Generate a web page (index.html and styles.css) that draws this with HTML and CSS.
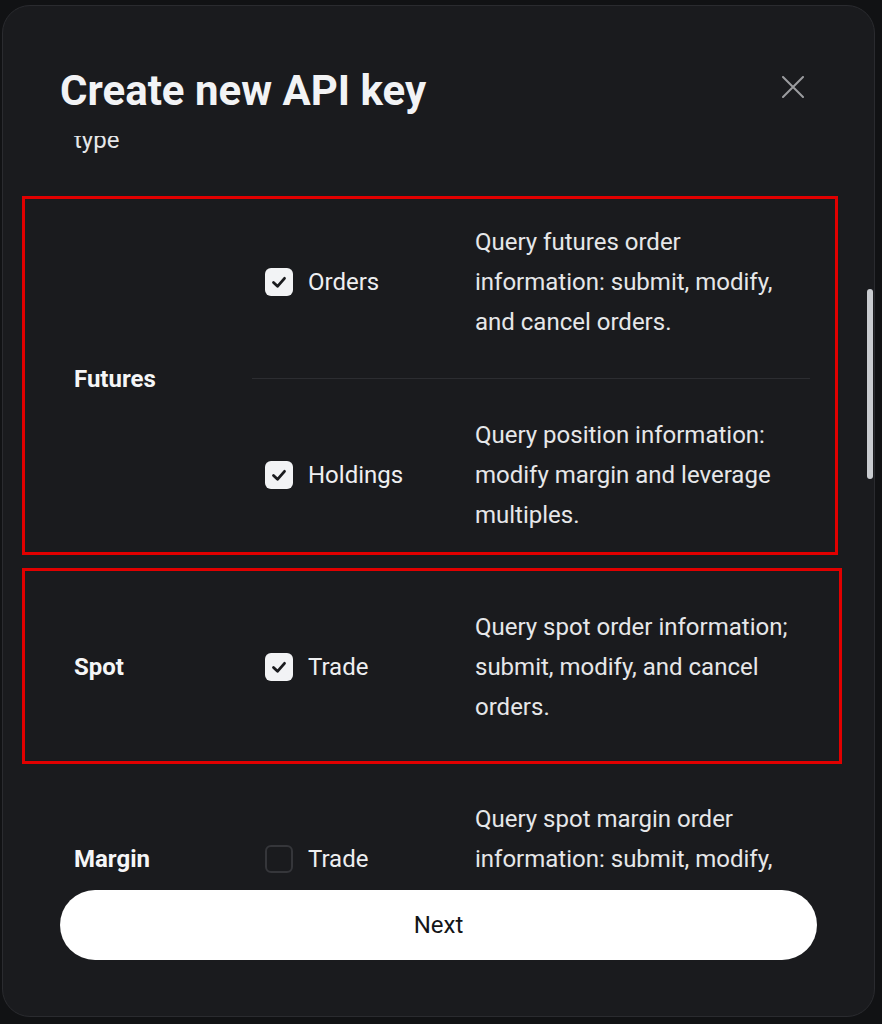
FILE: index.html
```html
<!DOCTYPE html>
<html lang="en">
<head>
    <meta charset="UTF-8">
    <meta name="viewport" content="width=device-width, initial-scale=1.0">
    <title>Create new API key</title>
    <link rel="stylesheet" href="styles.css">
</head>
<body>
    <div class="modal">
        <div class="modal-header">
            <h2>Create new API key</h2>
            <button class="close-btn" aria-label="Close">
                <svg width="22" height="22" viewBox="0 0 22 22"><path d="M1 1L21 21M21 1L1 21" stroke="currentColor" stroke-width="2" stroke-linecap="round"/></svg>
            </button>
        </div>

        <div class="modal-body">
            <div class="prev-tail">type</div>

            <div class="perm-group">
                <span class="mark mark-futures"></span>
                <div class="perm-label">Futures</div>
                <div class="perm-options">
                    <div class="perm-row">
                        <label class="perm-check"><span class="checkbox checked"><svg width="28" height="28" viewBox="0 0 28 28"><path d="M8.5 14.5L12.5 18.3L19.5 10.3" fill="none" stroke="#1a1b1e" stroke-width="2.8" stroke-linecap="round" stroke-linejoin="round"/></svg></span>Orders</label>
                        <div class="perm-desc">Query futures order information: submit, modify, and cancel orders.</div>
                    </div>
                    <div class="perm-row">
                        <label class="perm-check"><span class="checkbox checked"><svg width="28" height="28" viewBox="0 0 28 28"><path d="M8.5 14.5L12.5 18.3L19.5 10.3" fill="none" stroke="#1a1b1e" stroke-width="2.8" stroke-linecap="round" stroke-linejoin="round"/></svg></span>Holdings</label>
                        <div class="perm-desc">Query position information: modify margin and leverage multiples.</div>
                    </div>
                </div>
            </div>

            <div class="perm-group">
                <span class="mark mark-spot"></span>
                <div class="perm-label">Spot</div>
                <div class="perm-options">
                    <div class="perm-row">
                        <label class="perm-check"><span class="checkbox checked"><svg width="28" height="28" viewBox="0 0 28 28"><path d="M8.5 14.5L12.5 18.3L19.5 10.3" fill="none" stroke="#1a1b1e" stroke-width="2.8" stroke-linecap="round" stroke-linejoin="round"/></svg></span>Trade</label>
                        <div class="perm-desc">Query spot order information; submit, modify, and cancel orders.</div>
                    </div>
                </div>
            </div>

            <div class="perm-group">
                <div class="perm-label">Margin</div>
                <div class="perm-options">
                    <div class="perm-row">
                        <label class="perm-check"><span class="checkbox"></span>Trade</label>
                        <div class="perm-desc">Query spot margin order information: submit, modify, and cancel orders.</div>
                    </div>
                </div>
            </div>

            <div class="scroll-thumb"></div>
        </div>

        <div class="modal-footer">
            <button class="next-btn">Next</button>
        </div>
    </div>
</body>
</html>
```

FILE: styles.css
```css
body {
    margin: 0;
    padding: 0;
    background-color: #111214;
    font-family: Roboto, 'Liberation Sans', sans-serif;
    height: 1024px;
    overflow: hidden;
}

.modal {
    margin: 5px 0 0 2px;
    width: 873px;
    height: 1012px;
    box-sizing: border-box;
    background-color: #1a1b1e;
    border: 1px solid #2a2b2f;
    border-radius: 28px;
    display: flex;
    flex-direction: column;
    overflow: hidden;
}

.modal-header {
    display: flex;
    justify-content: space-between;
    align-items: center;
    padding: 60px 65px 20px 57px;
}

.modal-header h2 {
    margin: 0;
    font-size: 42px;
    line-height: 50px;
    font-weight: bold;
    color: #f2f3f5;
}

.close-btn {
    width: 32px;
    height: 32px;
    padding: 5px;
    margin-bottom: 8px;
    border: none;
    background: none;
    color: #9b9c9f;
    cursor: pointer;
}

.close-btn svg {
    display: block;
}

.modal-body {
    position: relative;
    height: 739px;
    overflow: hidden;
    padding: 0 64px 0 57px;
}

.prev-tail {
    margin: -16px 0 26px;
    padding-left: 14px;
    font-size: 24px;
    line-height: 40px;
    color: #e6e7e9;
}

.perm-group {
    position: relative;
    display: grid;
    grid-template-columns: 192px 1fr;
}

.perm-label {
    align-self: center;
    padding-left: 14px;
    font-size: 24px;
    font-weight: bold;
    color: #f5f6f7;
}

.perm-row {
    display: flex;
    align-items: center;
    padding: 36px 0 36px 13px;
}

.perm-row + .perm-row {
    border-top: 1px solid #2c2d31;
}

.perm-check {
    display: flex;
    align-items: center;
    gap: 15px;
    width: 210px;
    flex-shrink: 0;
    font-size: 24px;
    color: #eeeff1;
}

.checkbox {
    width: 28px;
    height: 28px;
    box-sizing: border-box;
    border-radius: 6px;
    border: 2px solid #35363a;
}

.checkbox.checked {
    border: none;
    background-color: #f2f3f5;
}

.checkbox svg {
    display: block;
}

.perm-desc {
    flex: 1;
    font-size: 24px;
    line-height: 40px;
    color: #e6e7e9;
}

/* red annotation boxes from the screenshot */
.mark {
    position: absolute;
    border: 3px solid #e10000;
    pointer-events: none;
}

.mark-futures {
    top: 10px;
    bottom: 16px;
    left: -38px;
    right: -28px;
}

.mark-spot {
    top: -3px;
    bottom: -1px;
    left: -38px;
    right: -32px;
}

.scroll-thumb {
    position: absolute;
    top: 153px;
    right: 1px;
    width: 6px;
    height: 190px;
    border-radius: 3px;
    background-color: #c9ccd0;
}

.modal-footer {
    padding: 15px 57px 55px;
}

.next-btn {
    display: block;
    width: 100%;
    height: 70px;
    border: none;
    border-radius: 35px;
    background-color: #ffffff;
    color: #141518;
    font-family: Roboto, 'Liberation Sans', sans-serif;
    font-size: 24px;
    font-weight: 400;
    cursor: pointer;
}
```
